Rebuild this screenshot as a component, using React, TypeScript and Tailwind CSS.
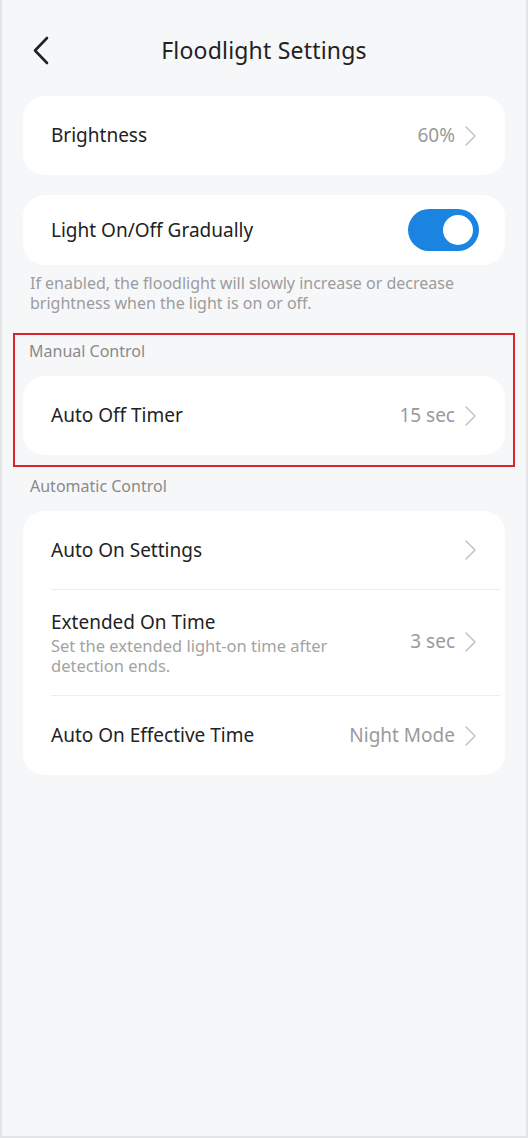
import React from "react";

const Chevron = () => (
  <svg width="14" height="24" viewBox="0 0 14 24" fill="none" className="shrink-0">
    <path d="M3 3l9 9-9 9" stroke="#c4c4c4" strokeWidth="1.6" strokeLinecap="round" strokeLinejoin="round" />
  </svg>
);

const Row = ({ label, value, h }: { label: string; value?: string; h: string }) => (
  <div className={`flex items-center justify-between pl-7 pr-[28px] ${h}`}>
    <span className="text-[19px] text-[#222]">{label}</span>
    <div className="flex items-center gap-[8px]">
      {value && <span className="text-[19px] text-[#9a9a9a]">{value}</span>}
      <Chevron />
    </div>
  </div>
);

export default function App() {
  return (
    <div
      className="w-[528px] h-[1138px] bg-[#f6f7f9] border-x-2 border-b-2 border-[#e4e5e7] flex flex-col"
      style={{ fontFamily: "'Noto Sans', 'Open Sans', sans-serif" }}
    >
      <div className="relative h-[96px] flex items-center justify-center">
        <svg width="18" height="30" viewBox="0 0 18 30" fill="none" className="absolute left-[30px] top-[36px]">
          <path d="M15 2L3 14.5 15 27" stroke="#222" strokeWidth="2.6" strokeLinecap="round" strokeLinejoin="round" />
        </svg>
        <span className="text-[23px] text-[#222] mt-[4px] tracking-[0.2px]">Floodlight Settings</span>
      </div>

      <div className="mx-[21px] bg-white rounded-[22px]">
        <Row label="Brightness" value="60%" h="h-[79px]" />
      </div>

      <div className="mx-[21px] mt-[20px] bg-white rounded-[22px] h-[70px] flex items-center justify-between pl-7 pr-[26px]">
        <span className="text-[19px] text-[#222]">Light On/Off Gradually</span>
        <div className="w-[71px] h-[42px] rounded-full bg-[#1b84e0] flex items-center justify-end pr-[6px]">
          <div className="w-[30px] h-[30px] rounded-full bg-white" />
        </div>
      </div>

      <p className="px-[28px] mt-[8px] text-[16px] leading-[20px] text-[#9c9c9c]">
        If enabled, the floodlight will slowly increase or decrease brightness when the light is on or off.
      </p>

      <div className="mx-[11px] mt-[20px] border-2 border-[#d7262e] pt-[2px] pb-[10px] px-[8px]">
        <div className="text-[16px] text-[#8a8a8a] pl-[6px] h-[28px] flex items-center">Manual Control</div>
        <div className="mt-[11px] bg-white rounded-[22px]">
          <Row label="Auto Off Timer" value="15 sec" h="h-[79px]" />
        </div>
      </div>

      <div className="text-[16px] text-[#8a8a8a] pl-[28px] mt-[6px] h-[26px] flex items-center">Automatic Control</div>

      <div className="mx-[21px] mt-[12px] bg-white rounded-[22px] flex flex-col">
        <Row label="Auto On Settings" h="h-[78px]" />
        <div className="ml-7 mr-[5px] h-px bg-[#ececec]" />
        <div className="flex items-center justify-between pl-7 pr-[28px] h-[105px]">
          <div className="flex flex-col">
            <span className="text-[19px] text-[#222] leading-[26px]">Extended On Time</span>
            <span className="text-[16.5px] text-[#a3a3a3] leading-[20px] mt-[1px] w-[300px]">
              Set the extended light-on time after detection ends.
            </span>
          </div>
          <div className="flex items-center gap-[8px] mt-[-2px]">
            <span className="text-[19px] text-[#9a9a9a]">3 sec</span>
            <Chevron />
          </div>
        </div>
        <div className="ml-7 mr-[5px] h-px bg-[#ececec]" />
        <Row label="Auto On Effective Time" value="Night Mode" h="h-[79px]" />
      </div>
    </div>
  );
}
